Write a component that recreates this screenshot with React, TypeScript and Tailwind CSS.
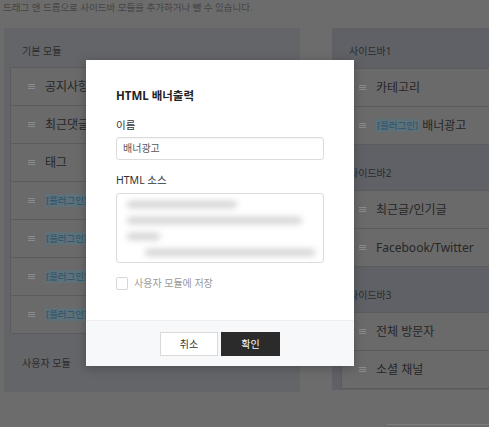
const font = "font-['Noto_Sans','Noto_Sans_CJK_KR',sans-serif]";

type Item = { name: string; plugin?: boolean };

const basicModules: Item[] = [
  { name: "공지사항" },
  { name: "최근댓글" },
  { name: "태그" },
  { name: "방문자 그래프", plugin: true },
  { name: "검색 상단", plugin: true },
  { name: "구글 애널리틱스", plugin: true },
  { name: "코드 하이라이트", plugin: true },
];

const sidebars: { title: string; items: Item[] }[] = [
  { title: "사이드바1", items: [{ name: "카테고리" }, { name: "배너광고", plugin: true }] },
  { title: "사이드바2", items: [{ name: "최근글/인기글" }, { name: "Facebook/Twitter" }] },
  { title: "사이드바3", items: [{ name: "전체 방문자" }, { name: "소셜 채널" }] },
];

// blurred html source lines (width, indent)
const sourceLines = [
  { w: 110, indent: 0 },
  { w: 175, indent: 0 },
  { w: 33, indent: 0 },
  { w: 170, indent: 18 },
];

function Handle() {
  return (
    <svg width="7" height="5" viewBox="0 0 7 5" className="shrink-0">
      <path d="M0 0.5h7M0 2.5h7M0 4.5h7" stroke="#8b8b8b" strokeWidth="1" />
    </svg>
  );
}

function ModuleRow({ item }: { item: Item }) {
  return (
    <div className="flex h-[38px] items-center border-b border-[#5b5c5e] pl-[17px] whitespace-nowrap">
      <Handle />
      <span className="ml-[10px] flex items-center text-[12px] leading-[16px] text-[#262626]">
        {item.plugin && (
          <span className="mr-[3px] bg-[#5e7078] px-[1px] text-[9.5px] leading-[13px] text-[#2a5470]">
            [플러그인]
          </span>
        )}
        {item.name}
      </span>
    </div>
  );
}

function BannerModal() {
  return (
    <div className="absolute left-[86px] top-[60px] flex h-[306px] w-[268px] flex-col bg-white shadow-[0_2px_10px_rgba(0,0,0,0.25)]">
      <div className="flex-1 px-[30px] pt-[28px]">
        <h2 className="text-[11.5px] font-bold leading-[16px] text-[#222]">HTML 배너출력</h2>

        <p className="mt-[14px] text-[10.5px] leading-[14px] text-[#333]">이름</p>
        <div className="mt-[5px] flex h-[23px] items-center rounded-[3px] border border-[#dcdcdc] px-[6px] text-[10px] text-[#555] shadow-[inset_0_1px_1px_rgba(0,0,0,0.04)]">
          배너광고
        </div>

        <p className="mt-[13px] text-[10.5px] leading-[14px] text-[#333]">HTML 소스</p>
        <div className="mt-[6px] h-[70px] overflow-hidden rounded-[3px] border border-[#dcdcdc] pt-[2px] pl-[10px]">
          {sourceLines.map((l, i) => (
            <div key={i} className="flex h-[16px] items-center" style={{ paddingLeft: l.indent }}>
              <div className="h-[7px] rounded-full bg-[#d2d2d2] blur-[3px]" style={{ width: l.w }} />
            </div>
          ))}
        </div>

        <div className="mt-[14px] flex items-center">
          <div className="h-[13px] w-[12px] shrink-0 rounded-[2px] border border-[#d6d6d6] bg-white" />
          <div className="ml-[6px] text-[10px] leading-[13px] text-[#9a9a9a]">사용자 모듈에 저장</div>
        </div>
      </div>

      <div className="flex h-[46px] justify-center gap-[3px] border-t border-[#eeeeee] bg-[#f7f8fa] pt-[11px]">
        <button className="h-[24px] w-[58px] border border-[#d9d9d9] bg-white text-[10px] text-[#333]">
          취소
        </button>
        <button className="h-[24px] w-[59px] bg-[#2b2b2b] text-[10px] text-white">확인</button>
      </div>
    </div>
  );
}

export default function App() {
  return (
    <div className={`relative h-[427px] w-full overflow-hidden bg-[#6c6c6c] ${font}`}>
      <p className="h-[16px] pl-[3px] text-[9.5px] leading-[16px] text-[#444]">
        드래그 앤 드롭으로 사이드바 모듈을 추가하거나 뺄 수 있습니다.
      </p>

      <div className="mt-[12px] flex items-start">
        {/* 기본 모듈 */}
        <div className="ml-[4px] h-[364px] w-[296px] bg-[#646569]">
          <div className="h-[39px] pl-[18px] pt-[16px] text-[10px] leading-[14px] text-[#2c2c2c]">기본 모듈</div>
          <div className="mx-[6px] border border-b-0 border-[#5b5c5e] bg-[#6a6a6a]">
            {basicModules.map((item, i) => (
              <ModuleRow key={i} item={item} />
            ))}
          </div>
          <div className="mt-[22px] pl-[18px] text-[10px] leading-[14px] text-[#2c2c2c]">사용자 모듈</div>
        </div>

        {/* 사이드바 */}
        <div className="ml-[32px] flex h-[362px] flex-1 flex-col gap-[11px] bg-[#5f6166] pt-[6px]">
          {sidebars.map((s) => (
            <div key={s.title}>
              <div className="flex h-[34px] items-center pl-[17px] text-[10px] text-[#2c2c2c]">{s.title}</div>
              <div className="ml-[9px] border-t border-l border-[#5b5c5e] bg-[#6a6a6a]">
                {s.items.map((item) => (
                  <ModuleRow key={item.name} item={item} />
                ))}
              </div>
            </div>
          ))}
        </div>
      </div>

      <div className="ml-auto mt-[32px] h-[10px] w-[102px] border-t border-[#7d7d7d]" />

      <BannerModal />
    </div>
  );
}
